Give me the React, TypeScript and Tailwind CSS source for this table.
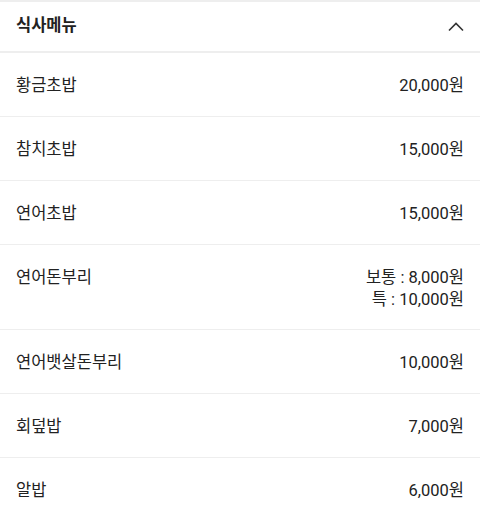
import React from "react";

interface MenuItem {
  name: string;
  prices: string[];
}

const MENU: MenuItem[] = [
  { name: "황금초밥", prices: ["20,000원"] },
  { name: "참치초밥", prices: ["15,000원"] },
  { name: "연어초밥", prices: ["15,000원"] },
  { name: "연어돈부리", prices: ["보통 : 8,000원", "특 : 10,000원"] },
  { name: "연어뱃살돈부리", prices: ["10,000원"] },
  { name: "회덮밥", prices: ["7,000원"] },
  { name: "알밥", prices: ["6,000원"] },
];

export default function App() {
  return (
    <div
      className="w-[480px] h-[517px] overflow-hidden bg-white text-[#222] text-[16.5px]"
      style={{ fontFamily: 'Roboto, "Noto Sans CJK KR", "Noto Sans", sans-serif' }}
    >
      {/* header */}
      <div className="h-[53px] border-t-2 border-b-2 border-[#eeeeee] flex items-center justify-between px-4">
        <span className="font-semibold">식사메뉴</span>
        <svg width="18" height="18" viewBox="0 0 18 18" className="mr-[-1px]">
          <path d="M2 12.5 L9 5.5 L16 12.5" fill="none" stroke="#333" strokeWidth="1.6" />
        </svg>
      </div>

      {MENU.map((item) => (
        <div
          key={item.name}
          className="flex justify-between items-start px-4 pt-[21px] pb-[19px] border-b border-[#eeeeee]"
        >
          <span className="leading-[23px]">{item.name}</span>
          <div className="flex flex-col items-end text-[16.5px] leading-[21.5px] pt-[1px]">
            {item.prices.map((p) => (
              <span key={p}>{p}</span>
            ))}
          </div>
        </div>
      ))}
    </div>
  );
}
